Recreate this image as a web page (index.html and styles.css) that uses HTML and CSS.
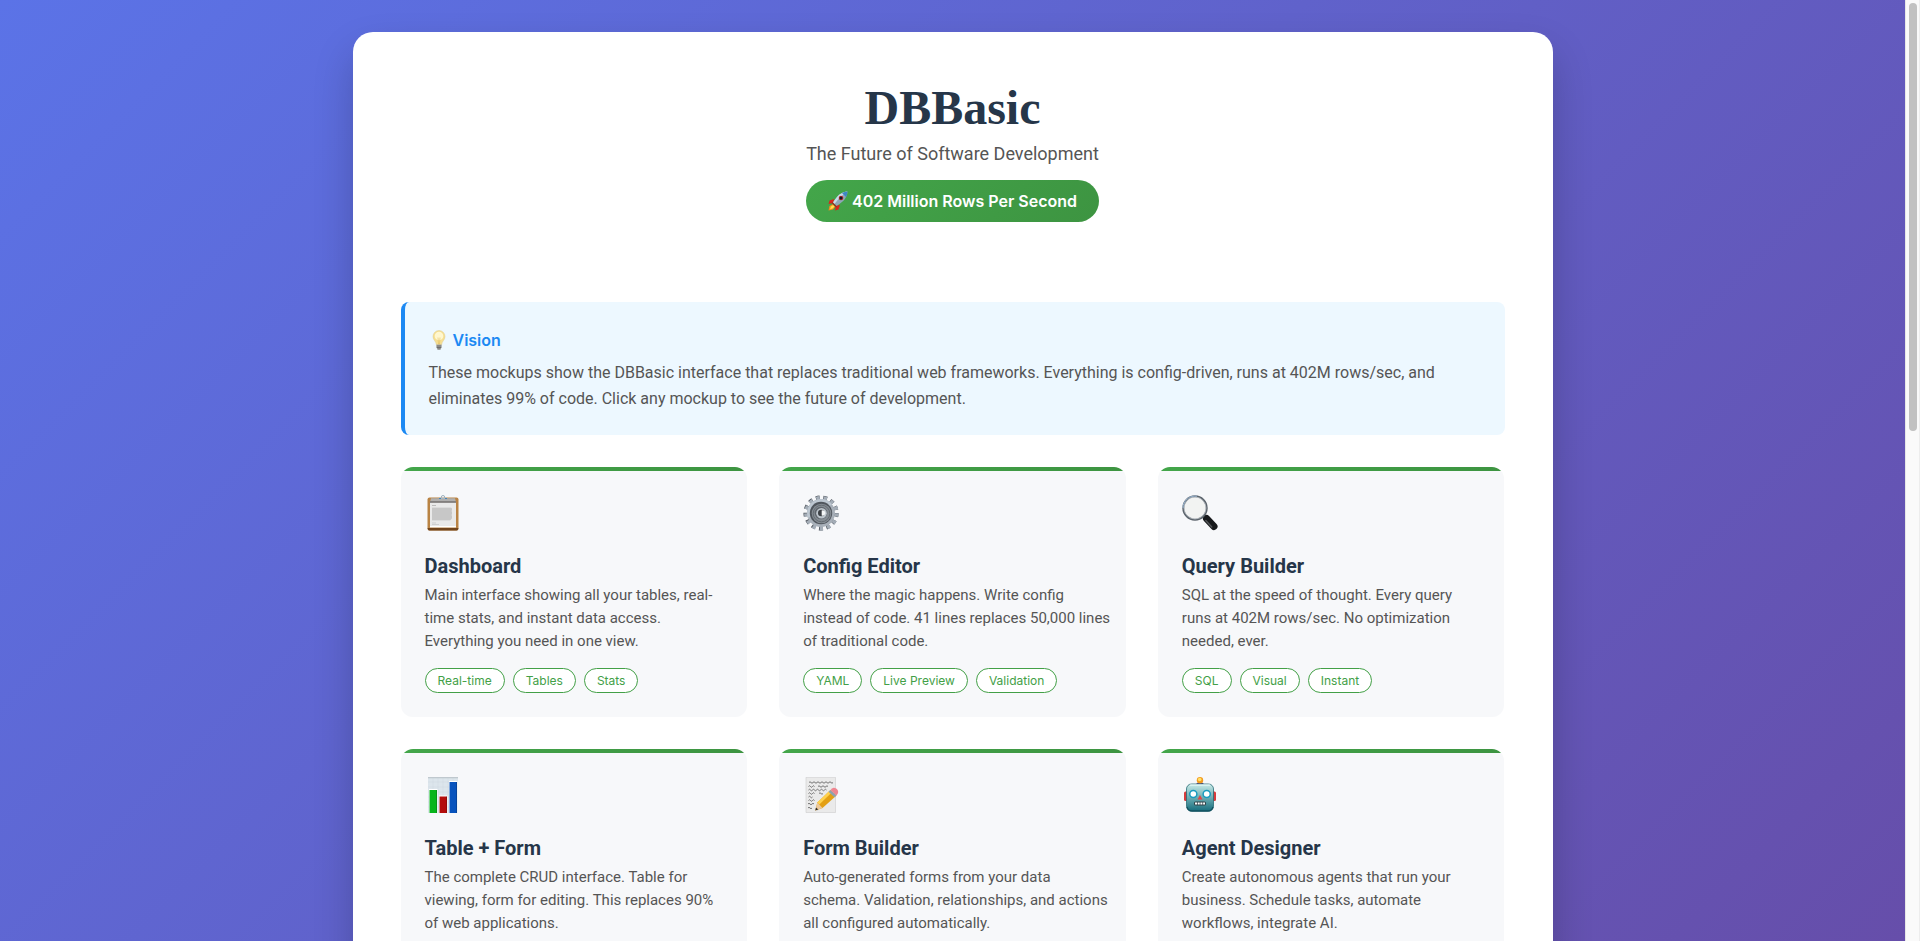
FILE: index.html
```html
<!DOCTYPE html>
<html lang="en">
<head>
<meta charset="utf-8">
<meta name="viewport" content="width=device-width, initial-scale=1">
<title>DBBasic</title>
<link rel="stylesheet" href="styles.css">
</head>
<body>
<div class="viewport">
  <main class="container">
    <header class="header">
      <h1 class="logo">DBBasic</h1>
      <p class="tagline">The Future of Software Development</p>
      <div class="badge">
        <svg class="emoji" viewBox="0 0 20 20" aria-hidden="true">
          <path d="M6 8 1.500 9.500.5 13l5-1zM12 14l-1.500 4.500L7 19.500l1-5z" fill="#d9251d"/>
          <path d="M5 13 1.500 15 .5 19.500 5 18.500l2.500-3z" fill="#f58b1f"/><path d="m5 14-2 1.500-1 2.800 3-1 1.500-2z" fill="#ffe34d"/>
          <path d="M19.500.5C14 .8 9.500 4 5 11.500L8.500 15C16 10.500 19.200 6 19.500.5z" fill="#8fa6b8"/>
          <path d="M19.500.5C14 .8 9.500 4 5 11.500l1.500 1.500C10 8 14 4 19.500.5z" fill="#c9dbe8"/>
          <path d="M19.500.5c-2 .1-3.800.6-5.500 1.500L18 6c1-1.700 1.400-3.500 1.500-5.500z" fill="#3d87c4"/>
          <circle cx="13" cy="7" r="2.300" fill="#c42c28"/><circle cx="13" cy="7" r="1.500" fill="#12192b"/>
          <path d="m4.500 11 4.500 4.500-1 1L3.500 12z" fill="#963024"/>
        </svg>
        <span>402 Million Rows Per Second</span>
      </div>
    </header>

    <section class="vision">
      <h2 class="vision-title">
        <svg class="emoji" viewBox="0 0 20 20" aria-hidden="true">
          <path d="M10 .5a6 6 0 0 0-6 6c0 3.500 3 4.500 3.500 8.500h5c.5-4 3.500-5 3.500-8.500a6 6 0 0 0-6-6z" fill="#f6df91" stroke="#dccb91" stroke-width=".5"/>
          <ellipse cx="10" cy="6" rx="4.300" ry="4.300" fill="#fff7cf"/><path d="M9 7.500 9.500 14h1l.5-6.500" fill="none" stroke="#e3bd62" stroke-width=".6"/>
          <path d="M7.500 14.500h5v3L11.500 19.500h-3l-1-2z" fill="#a9a9a5"/><path d="M7.500 16h5M7.700 17.500h4.600M8.500 19h3" stroke="#555" stroke-width=".7"/>
        </svg>
        <span>Vision</span>
      </h2>
      <p class="vision-text">These mockups show the DBBasic interface that replaces traditional web frameworks. Everything is config-driven, runs at 402M rows/sec, and eliminates 99% of code. Click any mockup to see the future of development.</p>
    </section>

    <section class="grid">
      <article class="card">
        <svg class="icon" viewBox="0 0 36 36" aria-hidden="true">
          <rect x="2.500" y="2.500" width="31" height="33" rx="2" fill="#b98344"/><path d="M2.700 33h30.600v1a2 2 0 0 1-2 1.500H4.700a2 2 0 0 1-2-1.500z" fill="#72451d"/>
          <path d="M5 6h26v26H5z" fill="#e9e9e9"/><path d="M5 31h26v1.500H5z" fill="#fff"/>
          <path d="M6 3.300h24l1 3.700H5z" fill="#b0afae"/><path d="M5 6.200h26v1.600H5z" fill="#777472"/>
          <path d="M14 3.800h8l-1.500-1.300h-5z" fill="#c7d0d7"/><circle cx="18" cy="2.200" r="1.700" fill="none" stroke="#9db0bd"/><path d="M14 3.500h2M20 3.500h2" stroke="#4486bd"/>
          <path d="M7 10.500h4" stroke="#bbb"/><path d="M7 12.500h19l1 1v10l-2 2H7z" fill="#cfcfcf"/>
          <path d="M7 14h20M7 16h19M7 18h20M7 20h19M7 22h20M7 24h19" stroke="#b7b7b7" stroke-width=".6"/><path d="M7 28h4M7 29.500h7" stroke="#c4c4c4" stroke-width=".7"/>
        </svg>
        <h3 class="card-title">Dashboard</h3>
        <p class="card-text">Main interface showing all your tables, real-<br class="wide">time stats, and instant data access. <br class="wide">Everything you need in one view.</p>
        <ul class="tags"><li class="tag">Real-time</li><li class="tag">Tables</li><li class="tag">Stats</li></ul>
      </article>

      <article class="card">
        <svg class="icon" viewBox="0 0 36 36" aria-hidden="true">
          <circle cx="18" cy="18" r="15.300" fill="none" stroke="#4e545c" stroke-width="4.500" stroke-dasharray="3.700 3.695"/>
          <circle cx="18.400" cy="18.300" r="15.300" fill="none" stroke="#a4adb7" stroke-width="4" stroke-dasharray="3.300 4.095"/>
          <circle cx="18" cy="18" r="14" fill="#a8b0b9"/><path d="M5 23A14 14 0 0 1 18 4a14 14 0 0 1 11 5.500z" fill="#bdc7d1"/>
          <circle cx="18" cy="18" r="11.200" fill="#50565d"/><circle cx="18.500" cy="18.500" r="9.800" fill="#858c93"/>
          <circle cx="18.500" cy="18.500" r="8.300" fill="none" stroke="#5d646b" stroke-width=".8"/>
          <circle cx="18" cy="18" r="6.300" fill="#60666d"/><circle cx="18.500" cy="18.300" r="5.300" fill="#bdc5cc"/>
          <circle cx="18.300" cy="18" r="3.300" fill="#3c4045"/><path d="M18.700 15.500a2.700 2.700 0 1 1 0 5z" fill="#f5f7f8"/>
        </svg>
        <h3 class="card-title">Config Editor</h3>
        <p class="card-text">Where the magic happens. Write config <br class="wide">instead of code. 41 lines replaces 50,000 lines <br class="wide">of traditional code.</p>
        <ul class="tags"><li class="tag">YAML</li><li class="tag">Live Preview</li><li class="tag">Validation</li></ul>
      </article>

      <article class="card">
        <svg class="icon" viewBox="0 0 36 36" aria-hidden="true">
          <path d="m20 20 5 5" stroke="#777" stroke-width="2.500"/><path d="m24.500 23.500 7.500 8" stroke="#17191b" stroke-width="7" stroke-linecap="round"/>
          <path d="m23.800 25.500 6 6.500" stroke="#55585a" stroke-width="1.300" stroke-linecap="round"/>
          <circle cx="13" cy="13" r="11.700" fill="#f2f3f2" stroke="#5c646c" stroke-width="2"/>
          <circle cx="13" cy="13" r="11" fill="none" stroke="#c3c8ce" stroke-width=".7"/><path d="M1 13A12 12 0 0 1 15 1.200" fill="none" stroke="#9ab7d4" stroke-width="1"/>
        </svg>
        <h3 class="card-title">Query Builder</h3>
        <p class="card-text">SQL at the speed of thought. Every query <br class="wide">runs at 402M rows/sec. No optimization <br class="wide">needed, ever.</p>
        <ul class="tags"><li class="tag">SQL</li><li class="tag">Visual</li><li class="tag">Instant</li></ul>
      </article>

      <article class="card">
        <svg class="icon" viewBox="0 0 36 36" aria-hidden="true">
          <path d="M3 0h30v36H3z" fill="#dce5ec"/><path d="M3 0h30v1.300H3z" fill="#bfc8ce"/>
          <path d="M3 5h30M3 10h30M3 15h30M3 20h30M3 25h30M3 30h30M8 1v35M13 1v35M18 1v35M23 1v35M28 1v35" stroke="#cbd7e0" stroke-width=".4"/>
          <path d="M4 12h8.500v24H4zM14 18.500h8.500V36H14zM24 4h8.500v32H24z" fill="#fff"/>
          <path d="M4.500 13H12v23H4.500z" fill="#08b51c"/><path d="M14.500 19.500H22V36h-7.500z" fill="#b30d0c"/><path d="M24.500 5H32v31h-7.500z" fill="#0753bd"/>
          <path d="M11 13h1v23h-1zM21 19.500h1V36h-1zM31 5h1v31h-1z" fill="#000" opacity=".18"/>
        </svg>
        <h3 class="card-title">Table + Form</h3>
        <p class="card-text">The complete CRUD interface. Table for <br class="wide">viewing, form for editing. This replaces 90% <br class="wide">of web applications.</p>
      </article>

      <article class="card">
        <svg class="icon" viewBox="0 0 36 36" aria-hidden="true">
          <path d="M3 .3h29.500v35.200H3z" fill="#eaeaea" stroke="#cdcdcd" stroke-width=".6"/>
          <path d="M6 5.500q1-1.500 2 0t2 0 2 0 2 0 2 0 2 0 2 0 2 0 2 0 2 0 2 0 2 0M5.500 9.500q1-1.500 2 0t2 0 2 0M15 9.500q1-1.500 2 0t2 0 2 0 2 0 2 0M5.500 13q1-1.500 2 0t2 0 2 0 2 0 2 0 2 0 2 0 2 0 2 0M5.500 16.500q1-1.500 2 0t2 0 2 0M16 16.500q1-1.500 2 0t2 0M5.500 20q1-1.500 2 0t2 0M5.500 23.500q1-1.500 2 0t2 0 2 0M5 27q1-1.500 2 0t2 0 2 0M5 31q1-1.500 2 0t2 0" fill="none" stroke="#555" stroke-width=".8"/>
          <path d="m13.500 34.500 19-17.500 1.500-3.500-18 18z" fill="#999" opacity=".6"/>
          <path d="m12.300 33.600 2-8.200L27.500 13l6 5.400-14 12.700z" fill="#e3a014"/><path d="M14.300 25.400 27.500 13l2 1.800L16.300 27.500z" fill="#ffd14d"/>
          <path d="m12.300 33.600 2-8.200 5.200 5.700z" fill="#ecc89a"/><path d="m12.300 33.600.7-3 2.200 2z" fill="#292929"/>
          <path d="m25.500 14.800 2-1.900 6 5.500-2.100 1.900z" fill="#8fa2ae"/><path d="m27.500 12.900 1.500-1.500q2-1.700 4.500.4t1.300 4.800l-1.300 1.800z" fill="#ee8590"/>
        </svg>
        <h3 class="card-title">Form Builder</h3>
        <p class="card-text">Auto-generated forms from your data <br class="wide">schema. Validation, relationships, and actions <br class="wide">all configured automatically.</p>
      </article>

      <article class="card">
        <svg class="icon" viewBox="0 0 36 36" aria-hidden="true">
          <defs><linearGradient id="robot" x1="0" y1="0" x2="0" y2="1"><stop offset="0" stop-color="#c9ebe8"/><stop offset=".45" stop-color="#75b3b8"/><stop offset="1" stop-color="#176d7d"/></linearGradient></defs>
          <rect x="2" y="14.500" width="4" height="9.500" rx="1.500" fill="#d83b3c"/><rect x="30" y="14.500" width="4" height="9.500" rx="1.500" fill="#d83b3c"/>
          <path d="M14 7q4-4 8 0v2h-8z" fill="#5d3f80"/><circle cx="18" cy="3.300" r="3.200" fill="#f39b1e"/><circle cx="17.700" cy="2.500" r="1.800" fill="#ffe169"/>
          <rect x="4.500" y="7" width="27" height="27" rx="5" fill="url(#robot)" stroke="#286b75" stroke-width=".8"/><path d="M8 8h20" stroke="#f1ffff"/>
          <path d="M5 30q1 4 5 4h16q4 0 5-4" fill="none" stroke="#125260" stroke-width="1.300"/>
          <circle cx="11.300" cy="17" r="4.300" fill="#189bc0"/><circle cx="24.700" cy="17" r="4.300" fill="#189bc0"/><circle cx="11.300" cy="17" r="2.800" fill="#fff"/><circle cx="24.700" cy="17" r="2.800" fill="#fff"/>
          <path d="m18 18-2.500 4.500h5z" fill="#e04545"/><rect x="12" y="24.500" width="12" height="4" rx="1.500" fill="#304349"/><path d="M13 26.500h10" stroke="#fff" stroke-width="2" stroke-dasharray="2 .7"/>
        </svg>
        <h3 class="card-title">Agent Designer</h3>
        <p class="card-text">Create autonomous agents that run your <br class="wide">business. Schedule tasks, automate <br class="wide">workflows, integrate AI.</p>
      </article>
    </section>
  </main>
</div>
<div class="scrollbar" aria-hidden="true"><div class="scrollbar-thumb"></div></div>
</body>
</html>
```

FILE: styles.css
```css
* {
  box-sizing: border-box;
  margin: 0;
  padding: 0;
}

body {
  display: grid;
  grid-template-columns: minmax(0, 1fr) 15px;
  height: 100vh;
  overflow: hidden;
  font-family: Roboto, "Liberation Sans", sans-serif;
  font-size: 16px;
  line-height: 26px;
  color: #555;
}

.viewport {
  height: 100vh;
  overflow: hidden;
  padding: 32px;
  background: linear-gradient(135deg, #5b73e7 0%, #664eaa 100%);
}

.container {
  max-width: 1200px;
  margin: 0 auto;
  padding: 48px;
  background: #fff;
  border-radius: 20px;
  box-shadow: 0 20px 40px rgba(0, 0, 0, 0.2);
}

.header {
  display: flex;
  flex-direction: column;
  align-items: center;
  margin-bottom: 80px;
}

.logo {
  font-family: "Liberation Serif", "Times New Roman", serif;
  font-size: 48px;
  line-height: 56px;
  font-weight: 700;
  color: #263649;
}

.tagline {
  margin-top: 4px;
  font-size: 18px;
  line-height: 28px;
}

.badge {
  display: flex;
  align-items: center;
  gap: 4px;
  margin-top: 12px;
  padding: 8px 22px;
  border-radius: 24px;
  background: linear-gradient(135deg, #43a64a, #3d9441);
  color: #fff;
  font-family: Inter, "Liberation Sans", sans-serif;
  font-weight: 600;
}

.emoji {
  width: 20px;
  height: 20px;
}

.vision {
  margin-bottom: 32px;
  padding: 25px 24px 23px;
  background: #edf8ff;
  border-left: 4px solid #1c89f3;
  border-radius: 8px;
}

.vision-title {
  display: flex;
  align-items: center;
  gap: 4px;
  margin-bottom: 7px;
  font-family: Inter, "Liberation Sans", sans-serif;
  font-size: 16px;
  font-weight: 600;
  color: #1c89f3;
}

.grid {
  display: grid;
  grid-template-columns: repeat(3, minmax(0, 1fr));
  gap: 32px;
}

.card {
  min-height: 250px;
  padding: 24px;
  border-radius: 12px;
  background: linear-gradient(135deg, #43a64a, #3d9441) top / 100% 4px no-repeat #f7f8fa;
}

.icon {
  display: block;
  width: 36px;
  height: 36px;
  margin: 4px 0 23px;
}

.card-title {
  font-size: 20px;
  line-height: 24px;
  font-weight: 700;
  color: #263649;
}

.card-text {
  margin: 6px 0 15px;
  font-size: 15px;
  line-height: 23px;
}

.wide {
  display: none;
}

@media (min-width: 1280px) {
  .card-text {
    white-space: nowrap;
  }

  .wide {
    display: inline;
  }
}

.tags {
  display: flex;
  flex-wrap: wrap;
  gap: 8px;
  list-style: none;
}

.tag {
  padding: 3px 12px;
  border: 1px solid #43a047;
  border-radius: 13px;
  background: #fff;
  color: #43a047;
  font-family: Inter, "Liberation Sans", sans-serif;
  font-size: 12px;
  line-height: 17px;
}

.scrollbar {
  padding: 3px 2px 0 3px;
  background: #fafafa;
  border-left: 1px solid #e7e7e7;
  border-right: 1px solid #ededed;
}

.scrollbar-thumb {
  height: 45.6%;
  border-radius: 4px;
  background: #c1c1c1;
}
```
